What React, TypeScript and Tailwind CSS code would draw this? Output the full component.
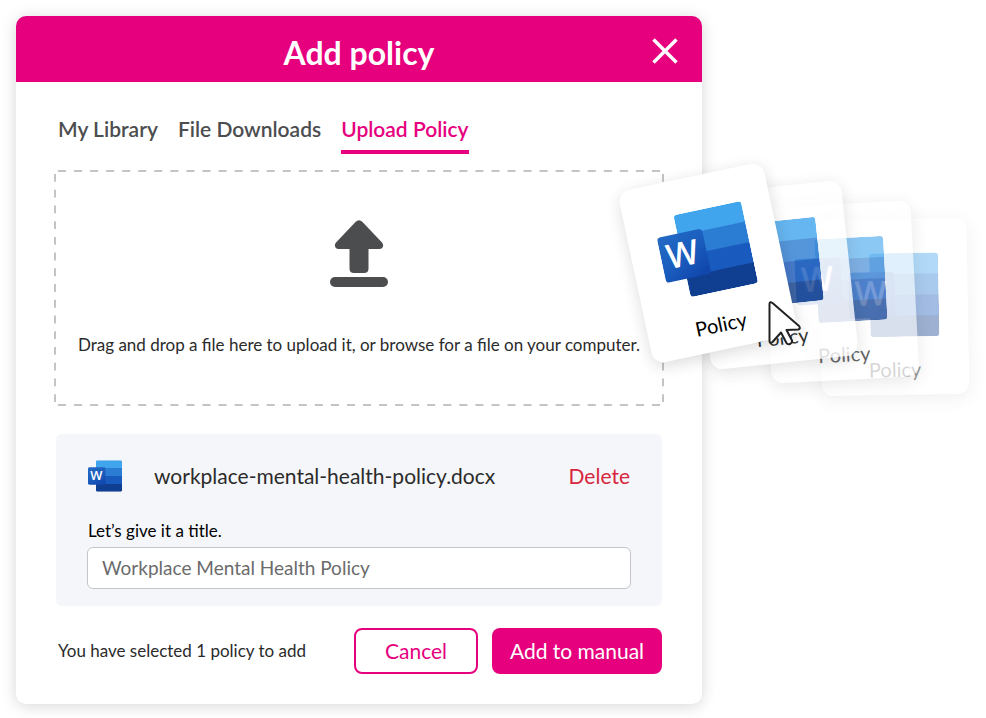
import { useId, useState } from "react";

const TABS = ["My Library", "File Downloads", "Upload Policy"];

// Drawn back to front, the last card is the one under the cursor
const CARDS = [
  "left-[118px] top-[203px] -rotate-1 opacity-40",
  "left-[65px] top-[188px] -rotate-3 opacity-60",
  "left-0 top-[171px] -rotate-6 opacity-80",
  "-left-[68px] top-[159px] -rotate-12",
];

function WordIcon({ className }: { className: string }) {
  const id = useId();

  return (
    <svg viewBox="0 0 1881 1750" className={className} aria-hidden="true">
      <defs>
        <clipPath id={`${id}-sheet`}>
          <rect x="440" width="1441" height="1750" rx="80" />
        </clipPath>
        <linearGradient id={`${id}-plate`} x1="0.2" y1="0" x2="0.8" y2="1">
          <stop offset="0" stopColor="#2368c4" />
          <stop offset="0.5" stopColor="#1a5dbe" />
          <stop offset="1" stopColor="#1146ac" />
        </linearGradient>
      </defs>
      <g clipPath={`url(#${id}-sheet)`}>
        <path fill="#41a5ee" d="M440 0h1441v450H440z" />
        <path fill="#2b7cd3" d="M440 437h1441v450H440z" />
        <path fill="#185abd" d="M440 875h1441v450H440z" />
        <path fill="#103f91" d="M440 1312h1441v438H440z" />
      </g>
      <rect y="394" width="962" height="962" rx="80" fill={`url(#${id}-plate)`} />
      <text
        x="455"
        y="1085"
        textAnchor="middle"
        fill="#fff"
        fontSize="710"
        fontWeight="600"
        fontFamily="'Open Sans', sans-serif"
      >
        W
      </text>
    </svg>
  );
}

function UploadIcon() {
  return (
    <svg width="58" height="68" viewBox="0 0 58 68" fill="#4c4d4f" aria-hidden="true">
      <path d="M25.5 2Q29-1.5 32.5 2L52 22.5Q54 25 52.500 27.500Q51.500 29 49 29H38.500V48.500Q38.500 53 34 53H24Q19.500 53 19.500 48.500V29H9Q6.500 29 5.500 27.500Q4 25 6 22.500Z" />
      <rect y="57" width="58" height="10" rx="5" />
    </svg>
  );
}

// Each side starts and ends on a full dash, so the corners stay open
function DashedFrame() {
  return (
    <div className="absolute inset-0 text-[#c4c4c4]" aria-hidden="true">
      <svg
        className="absolute left-1 top-px w-[calc(100%-8px)] h-[calc(100%-2px)] overflow-visible"
        stroke="currentColor"
        strokeWidth="2"
        strokeDasharray="8 8"
      >
        <line x1="0" y1="0" x2="100%" y2="0" pathLength="600" />
        <line x1="0" y1="100%" x2="100%" y2="100%" pathLength="600" />
      </svg>
      <svg
        className="absolute left-px top-1 w-[calc(100%-2px)] h-[calc(100%-8px)] overflow-visible"
        stroke="currentColor"
        strokeWidth="2"
        strokeDasharray="8 8"
      >
        <line x1="0" y1="0" x2="0" y2="100%" pathLength="232" />
        <line x1="100%" y1="0" x2="100%" y2="100%" pathLength="232" />
      </svg>
    </div>
  );
}

function DraggedCards() {
  return (
    <div className="relative">
      {CARDS.map((place) => (
        <div
          key={place}
          className={`absolute w-[148px] h-[176px] pt-[34px] flex flex-col items-center rounded-xl bg-white text-black shadow-[0_4px_16px_rgba(0,0,0,0.14)] ${place}`}
        >
          <WordIcon className="w-[90px] h-[84px]" />
          <span className="mt-5 text-xl leading-6">Policy</span>
        </div>
      ))}
      <svg
        width="36"
        height="46"
        viewBox="0 0 36 46"
        className="absolute left-[66px] top-[285px]"
        aria-hidden="true"
      >
        <path
          d="M1.500 3Q1.500 0 4.500 2L31 25Q33 28 30 28.500L18.500 29L24 39.500Q24.500 42 22 43Q20 44 18.500 42L13 31.500L4.500 41Q1.500 43 1.500 39.500Z"
          fill="#fff"
          stroke="#222"
          strokeWidth="2"
          strokeLinejoin="round"
        />
      </svg>
    </div>
  );
}

export default function App() {
  const [tab, setTab] = useState("Upload Policy");
  const [title, setTitle] = useState("Workplace Mental Health Policy");

  return (
    <main className="min-h-screen overflow-hidden bg-white p-4 grid grid-cols-[1fr_268px] items-start font-['Lato',sans-serif] text-[#2b2b2b]">
      <section className="rounded-[10px] bg-white shadow-[0_2px_16px_rgba(0,0,0,0.16)]">
        {/* Header */}
        <header className="h-[66px] px-6 pt-1 grid grid-cols-[26px_1fr_26px] items-center rounded-t-[10px] bg-[#e6007e] text-white">
          <h1 className="col-start-2 pt-1 text-center text-[32px] leading-10 font-bold">Add policy</h1>
          <button type="button" aria-label="Close">
            <svg width="26" height="26" viewBox="0 0 26 26" stroke="currentColor" strokeWidth="3.400">
              <path d="M1.500 1.500L24.500 24.500M24.500 1.500L1.500 24.500" />
            </svg>
          </button>
        </header>

        <div className="px-10 pt-[33px] pb-[30px]">
          {/* Tabs */}
          <nav className="pl-0.5 flex gap-5 text-[21px] leading-7 font-semibold">
            {TABS.map((name) => (
              <button
                key={name}
                type="button"
                onClick={() => setTab(name)}
                className={`pb-[7px] border-b-4 ${
                  name === tab
                    ? "border-[#e6007e] text-[#e6007e]"
                    : "border-transparent text-[#4c4d4f]"
                }`}
              >
                {name}
              </button>
            ))}
          </nav>

          {/* Drop zone */}
          <div className="relative -mx-0.5 mt-4 pt-[50px] pb-[49px] flex flex-col items-center gap-[45px]">
            <DashedFrame />
            <UploadIcon />
            <p className="text-[17px] leading-6">
              Drag and drop a file here to upload it, or browse for a file on your computer.
            </p>
          </div>

          {/* Selected file */}
          <div className="mt-7 px-[31px] pt-[18px] pb-[17px] rounded-md bg-[#f5f6f9]">
            <div className="h-12 px-px flex items-center text-[21px]">
              <WordIcon className="w-[34px] h-8 mr-8" />
              <span>workplace-mental-health-policy.docx</span>
              <button type="button" className="ml-auto text-[#d7263d]">
                Delete
              </button>
            </div>
            <label htmlFor="title" className="block mt-[19px] pl-px text-[17px] leading-6 text-black">
              Let’s give it a title.
            </label>
            <input
              id="title"
              type="text"
              value={title}
              onChange={(e) => setTitle(e.target.value)}
              className="block mt-1 w-full h-[42px] px-3.5 pb-0.5 rounded-md border border-[#c2c5ca] bg-white text-[19px] text-[#6b6b6b]"
            />
          </div>

          {/* Footer */}
          <footer className="mt-[22px] pl-0.5 flex items-center">
            <p className="text-[17px] leading-6">You have selected 1 policy to add</p>
            <div className="ml-auto flex gap-3.5 text-[21px]">
              <button
                type="button"
                className="w-[124px] h-[46px] rounded-lg border-2 border-[#e6007e] bg-white text-[#e6007e]"
              >
                Cancel
              </button>
              <button type="button" className="w-[170px] h-[46px] rounded-lg bg-[#e6007e] text-white">
                Add to manual
              </button>
            </div>
          </footer>
        </div>
      </section>

      <DraggedCards />
    </main>
  );
}
